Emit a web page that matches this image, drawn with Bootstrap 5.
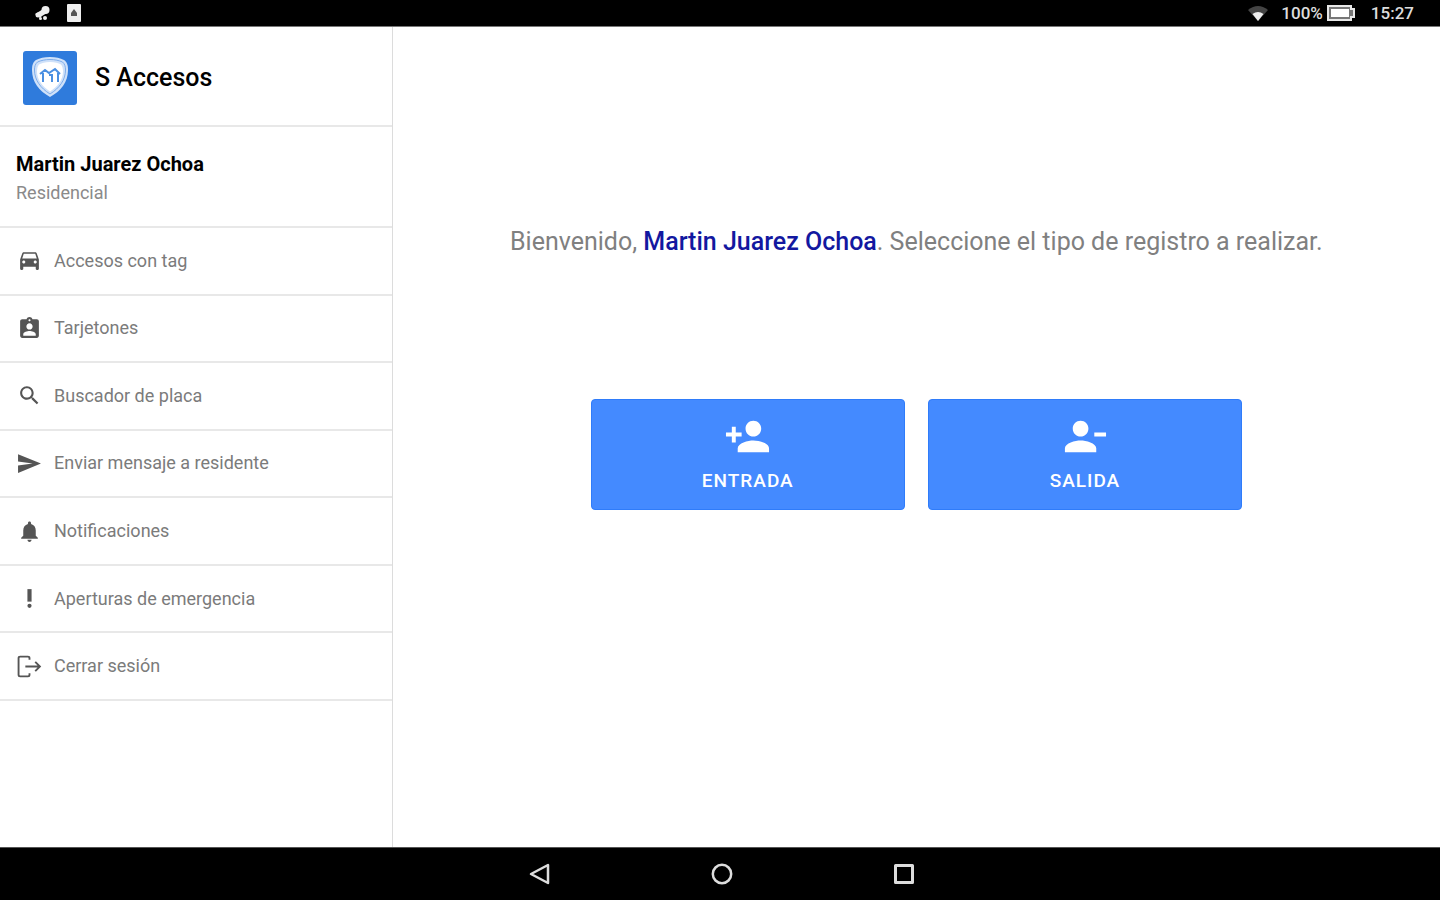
<!DOCTYPE html>
<html lang="es">
<head>
<meta charset="utf-8">
<meta name="viewport" content="width=device-width, initial-scale=1">
<title>S Accesos</title>
<link href="https://cdn.jsdelivr.net/npm/bootstrap@5.3.0/dist/css/bootstrap.min.css" rel="stylesheet">
<style>
body { font-family: Roboto, "Liberation Sans", sans-serif; color: #000; background: #fff; }
.status-bar { height: 27px; font-size: 17px; line-height: 27px; font-weight: 500; color: #ddd; padding: 0 26px 0 34px; border-bottom: 1px solid #777; }
.app-shell { display: grid; grid-template-columns: 3fr 8fr; }
.side-panel { border-right: 1px solid #dcdcdc; }
.brand { height: 100px; padding: 3px 23px 0; gap: 18px; border-bottom: 2px solid #e8e8e8; }
.brand h1 { font-size: 25px; line-height: 32px; font-weight: 500; }
.profile { height: 101px; padding: 22px 16px 0; border-bottom: 2px solid #e8e8e8; }
.profile h2 { font-size: 20px; line-height: 30px; font-weight: 700; }
.profile p { font-size: 18px; line-height: 28px; color: #8a8a8a; }
.side-menu { display: grid; grid-auto-rows: 1fr; min-height: 473px; }
.side-menu a { padding: 0 17px; gap: 12px; font-size: 18px; line-height: 28px; color: #7b7b7b; border-bottom: 2px solid #e8e8e8; }
.side-menu svg { width: 25px; height: 25px; color: #555; fill: currentColor; }
.welcome { padding-top: 197px; font-size: 25px; line-height: 36px; color: #808080; }
.welcome strong { font-weight: 500; color: #1318a0; }
.actions { gap: 23px; margin-top: 139px; }
.btn-action { width: 30%; height: 111px; border-radius: 4px; border: 1px solid #2f7cfa; color: #fff; background: #448aff; font-size: 19px; line-height: 28px; font-weight: 500; letter-spacing: 1px; padding: 13px 0 0; gap: 7px; }
.btn-action:hover { color: #fff; background: #337dfa; }
.btn-action svg { width: 47px; height: 47px; fill: #fff; }
.nav-keys { height: 53px; gap: 158px; padding-left: 3px; border-top: 1px solid #555; }
.nav-keys button { width: 24px; height: 24px; }
</style>
</head>
<body class="d-flex flex-column min-vh-100">
<header class="status-bar d-flex align-items-center bg-black">
  <svg width="17" height="16" viewBox="0 0 17 16" fill="#eee" aria-hidden="true"><circle cx="11.500" cy="5" r="4"/><circle cx="4" cy="10" r="2.500"/><path d="M1 9l5-3 3-2 4 4-5 3-2 2z"/><circle cx="11" cy="13" r="2"/><circle cx="6.500" cy="13.500" r="1.500"/></svg>
  <svg class="ms-3" width="14" height="18" viewBox="0 0 14 18" aria-hidden="true"><rect width="14" height="18" rx="1" fill="#eee"/><path d="M7 5l3 4v3H4V9z" fill="#555"/></svg>
  <svg class="ms-auto me-2" width="22" height="17" viewBox="0 0 22 17" aria-hidden="true"><path d="M1 5Q11-3 21 5L11 16z" fill="#444"/><path d="M5.500 9Q11 5 16.500 9L11 16z" fill="#eee"/></svg>
  <span class="ms-1">100%</span>
  <svg class="ms-1" width="28" height="16" viewBox="0 0 28 16" aria-hidden="true"><path d="M1 1h23v3h3v8h-3v3H1z" fill="#777" stroke="#e8e8e8" stroke-width="2"/><path d="M4 4h18v8H4z" fill="#fff"/></svg>
  <span class="ms-3">15:27</span>
</header>
<div class="app-shell flex-grow-1">
  <aside class="side-panel">
    <div class="brand d-flex align-items-center">
      <svg width="54" height="54" viewBox="0 0 54 54" aria-hidden="true"><rect width="54" height="54" rx="3" fill="#2f7bdc"/><path d="M27 6c6 0 10 1 14 3 3 2 4 5 4 10 0 12-7 21-18 27C16 40 9 31 9 19c0-5 1-8 4-10 4-2 8-3 14-3z" fill="#cfe1f9"/><path d="M27 8.500c5 0 9 1 12.500 2.500 2.500 2 3 5 3 8 0 10-6 18-15.500 24-9.500-6-15.500-14-15.500-24 0-3 .5-6 3-8 3.500-1.500 7.500-2.500 12.500-2.500z" fill="none" stroke="#7dadec"/><path d="M27 11c5 0 8 1 11 2.500 1.500 2 2 4.500 2 7 0 8.500-5.500 15-13 20-7.500-5-13-11.500-13-20 0-2.500.5-5 2-7 3-1.500 6-2.500 11-2.500z" fill="#fff"/><path d="M17 23l5-4 4 3 6-4 5 5M20 22v9M35 22v9M26 24h3v7" fill="none" stroke="#4a8fe2" stroke-width="2"/></svg>
      <h1 class="m-0">S Accesos</h1>
    </div>
    <div class="profile">
      <h2 class="m-0">Martin Juarez Ochoa</h2>
      <p class="m-0">Residencial</p>
    </div>
    <nav class="side-menu" aria-label="Menú principal">
      <a href="#" class="d-flex align-items-center text-decoration-none"><svg viewBox="0 0 24 24" aria-hidden="true"><path d="M18.920 5.010C18.720 4.420 18.160 4 17.500 4h-11c-.66 0-1.210.42-1.420 1.010L3 11v9c0 .55.45 1 1 1h1c.55 0 1-.45 1-1v-2h12v2c0 .55.45 1 1 1h1c.55 0 1-.45 1-1v-9l-2.080-5.990zM6.500 15c-.83 0-1.500-.67-1.500-1.500S5.670 12 6.500 12s1.500.67 1.500 1.500S7.330 15 6.500 15zm11 0c-.83 0-1.500-.67-1.500-1.500s.67-1.500 1.500-1.500 1.500.67 1.500 1.500-.67 1.500-1.500 1.500zM5 10l1.500-4.500h11L19 10H5z"/></svg>Accesos con tag</a>
      <a href="#" class="d-flex align-items-center text-decoration-none"><svg viewBox="0 0 24 24" aria-hidden="true"><path d="M19 3h-4.180C14.400 1.840 13.300 1 12 1s-2.400.84-2.820 2H5c-1.100 0-2 .9-2 2v14c0 1.100.9 2 2 2h14c1.100 0 2-.9 2-2V5c0-1.100-.9-2-2-2zm-7 0c.55 0 1 .45 1 1s-.45 1-1 1-1-.45-1-1 .45-1 1-1zm0 4c1.660 0 3 1.340 3 3s-1.340 3-3 3-3-1.340-3-3 1.340-3 3-3zm6 12H6v-1.400c0-2 4-3.100 6-3.100s6 1.100 6 3.100V19z"/></svg>Tarjetones</a>
      <a href="#" class="d-flex align-items-center text-decoration-none"><svg viewBox="0 0 24 24" aria-hidden="true"><path d="M15.500 14h-.79l-.28-.27C15.410 12.590 16 11.110 16 9.500 16 5.910 13.090 3 9.500 3S3 5.910 3 9.500 5.910 16 9.500 16c1.610 0 3.090-.59 4.230-1.570l.27.28v.79l5 4.990L20.490 19l-4.990-5zm-6 0C7.010 14 5 11.990 5 9.500S7.010 5 9.500 5 14 7.010 14 9.500 11.990 14 9.500 14z"/></svg>Buscador de placa</a>
      <a href="#" class="d-flex align-items-center text-decoration-none"><svg viewBox="0 0 24 24" aria-hidden="true"><path d="M1 21l22-9L1 3v7l14 2-14 2z"/></svg>Enviar mensaje a residente</a>
      <a href="#" class="d-flex align-items-center text-decoration-none"><svg viewBox="0 0 24 24" aria-hidden="true"><path d="M12 22c1.100 0 2-.9 2-2h-4c0 1.100.89 2 2 2zm6-6v-5c0-3.070-1.640-5.640-4.500-6.320V4c0-.83-.67-1.500-1.500-1.500s-1.500.67-1.500 1.500v.68C7.630 5.360 6 7.920 6 11v5l-2 2v1h16v-1l-2-2z"/></svg>Notificaciones</a>
      <a href="#" class="d-flex align-items-center text-decoration-none"><svg viewBox="0 0 24 24" aria-hidden="true"><circle cx="12" cy="19" r="2"/><path d="M10 3h4v12h-4z"/></svg>Aperturas de emergencia</a>
      <a href="#" class="d-flex align-items-center text-decoration-none"><svg viewBox="0 0 24 24" aria-hidden="true"><path d="M12 5.500V4Q12 2.500 10.500 2.500H3Q1.500 2.500 1.500 4V20Q1.500 21.500 3 21.500H10.500Q12 21.500 12 20V18.500M8 12H22M17.500 7.500L22 12L17.500 16.500" fill="none" stroke="currentColor" stroke-width="1.800"/></svg>Cerrar sesión</a>
    </nav>
  </aside>
  <main>
    <p class="welcome m-0 text-center">Bienvenido, <strong>Martin Juarez Ochoa</strong>. Seleccione el tipo de registro a realizar.</p>
    <div class="actions d-flex justify-content-center">
      <button type="button" class="btn btn-action d-flex flex-column align-items-center"><svg viewBox="0 0 24 24" aria-hidden="true"><path d="M15 12c2.210 0 4-1.790 4-4s-1.790-4-4-4-4 1.790-4 4 1.790 4 4 4zm-9-2V7H4v3H1v2h3v3h2v-3h3v-2H6zm9 4c-2.670 0-8 1.340-8 4v2h16v-2c0-2.660-5.330-4-8-4z"/></svg>ENTRADA</button>
      <button type="button" class="btn btn-action d-flex flex-column align-items-center"><svg viewBox="0 0 24 24" aria-hidden="true"><path d="M14 8c0-2.210-1.790-4-4-4S6 5.790 6 8s1.790 4 4 4 4-1.790 4-4zm3 2v2h6v-2h-6zM2 18v2h16v-2c0-2.660-5.330-4-8-4s-8 1.340-8 4z"/></svg>SALIDA</button>
    </div>
  </main>
</div>
<footer class="nav-keys d-flex align-items-center justify-content-center bg-black">
  <button type="button" class="btn p-0 border-0 d-flex" aria-label="Atrás"><svg width="24" height="24" viewBox="0 0 24 24" fill="none" stroke="#ddd" stroke-width="2.500" stroke-linejoin="round"><path d="M20 3v18L3 12z"/></svg></button>
  <button type="button" class="btn p-0 border-0 d-flex" aria-label="Inicio"><svg width="24" height="24" viewBox="0 0 24 24" fill="none" stroke="#ddd" stroke-width="2.500"><circle cx="12" cy="12" r="9.200"/></svg></button>
  <button type="button" class="btn p-0 border-0 d-flex" aria-label="Recientes"><svg width="24" height="24" viewBox="0 0 24 24" fill="none" stroke="#ddd" stroke-width="3" stroke-linejoin="round"><path d="M3.500 3.500h17v17h-17z"/></svg></button>
</footer>
<script src="https://cdn.jsdelivr.net/npm/bootstrap@5.3.0/dist/js/bootstrap.bundle.min.js"></script>
</body>
</html>
